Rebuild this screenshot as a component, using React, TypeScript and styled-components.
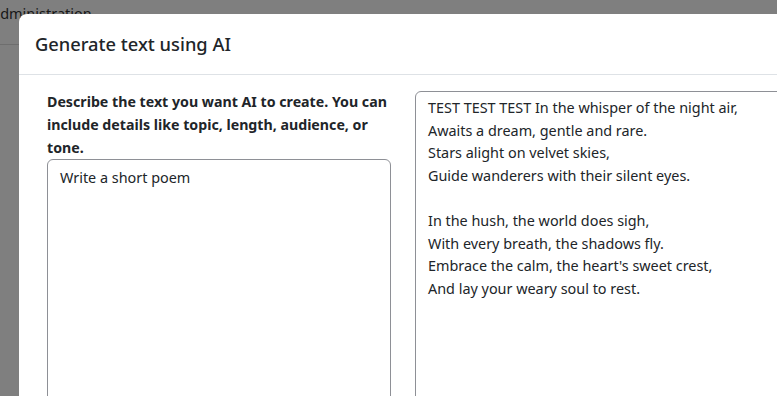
import styled, { createGlobalStyle } from 'styled-components';

const GlobalStyle = createGlobalStyle`
    html, body {
        margin: 0;
        padding: 0;
        width: 777px;
        height: 396px;
        overflow: hidden;
        background: #ffffff;
        font-family: 'Noto Sans', 'Open Sans', sans-serif;
        color: #212529;
    }
`;

const poem = `TEST TEST TEST In the whisper of the night air,
Awaits a dream, gentle and rare.
Stars alight on velvet skies,
Guide wanderers with their silent eyes.

In the hush, the world does sigh,
With every breath, the shadows fly.
Embrace the calm, the heart's sweet crest,
And lay your weary soul to rest.`;

const App = () => {
    return (
        <>
            <GlobalStyle />
            <Page>
                <PageHeader>
                    <PageTitle>administration</PageTitle>
                </PageHeader>
            </Page>
            <Backdrop />
            <Modal>
                <ModalHeader>
                    <ModalTitle>Generate text using AI</ModalTitle>
                </ModalHeader>
                <ModalBody>
                    <PromptColumn>
                        <Label htmlFor="prompt">
                            Describe the text you want AI to create. You can include details like topic, length, audience, or tone.
                        </Label>
                        <TextBox id="prompt" defaultValue="Write a short poem" />
                    </PromptColumn>
                    <ResultColumn>
                        <TextBox $result readOnly defaultValue={poem} />
                    </ResultColumn>
                </ModalBody>
            </Modal>
        </>
    );
}

const Page = styled.div`
    width: 100%;
    height: 396px;
`;

const PageHeader = styled.div`
    height: 45px;
    border-bottom: 1px solid #dcdcdc;
    box-sizing: border-box;
`;

const PageTitle = styled.div`
    margin-left: -8px;
    font-size: 14.5px;
    line-height: 22px;
    padding-top: 2px;
    color: #333;
`;

const Backdrop = styled.div`
    position: fixed;
    inset: 0;
    background: rgba(0, 0, 0, 0.5);
`;

const Modal = styled.div`
    position: fixed;
    top: 14px;
    left: 19px;
    width: 900px;
    height: 500px;
    background: #ffffff;
    border-radius: 8px;
    display: flex;
    flex-direction: column;
`;

const ModalHeader = styled.div`
    height: 61px;
    box-sizing: border-box;
    padding: 0 16px;
    border-bottom: 1px solid #dee2e6;
    display: flex;
    align-items: center;
`;

const ModalTitle = styled.h5`
    margin: 0;
    font-size: 18.3px;
    font-weight: 500;
    line-height: 28px;
    color: #212529;
`;

const ModalBody = styled.div`
    display: flex;
    gap: 24px;
    padding: 15px 28px 0;
`;

const PromptColumn = styled.div`
    width: 344px;
    display: flex;
    flex-direction: column;
`;

const ResultColumn = styled.div`
    flex: 1;
    padding-top: 1px;
`;

const Label = styled.label`
    font-size: 14.2px;
    font-weight: 700;
    line-height: 23px;
    color: #212529;
`;

const TextBox = styled.textarea<{ $result?: boolean }>`
    display: block;
    box-sizing: border-box;
    width: 100%;
    height: ${p => (p.$result ? '340px' : '280px')};
    margin: 0;
    padding: ${p => (p.$result ? '5px 12px' : '7px 12px')};
    border: 1px solid #8e9096;
    border-radius: 6px;
    font-family: 'Noto Sans', 'Open Sans', sans-serif;
    font-size: 14.4px;
    line-height: 22.6px;
    color: #212529;
    background: #ffffff;
    resize: none;
    outline: none;
`;

export default App;
